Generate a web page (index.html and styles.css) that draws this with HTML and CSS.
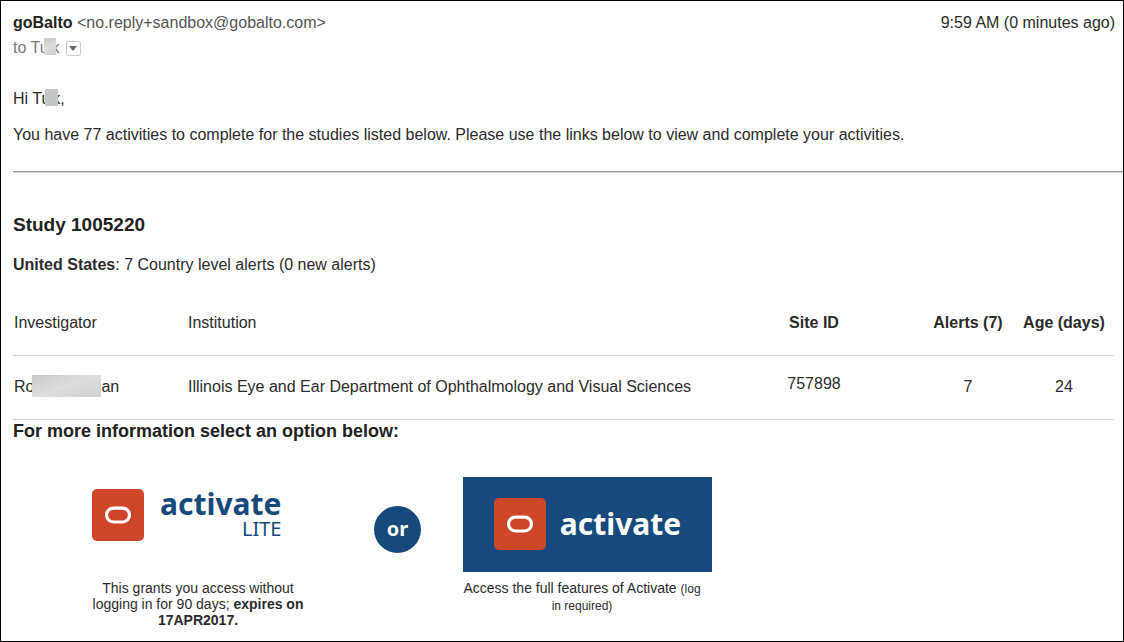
FILE: index.html
```html
<!DOCTYPE html>
<html lang="en">
<head>
<meta charset="utf-8">
<meta name="viewport" content="width=device-width, initial-scale=1">
<title>goBalto activities</title>
<link rel="stylesheet" href="styles.css">
</head>
<body>
<main class="mail">
  <header class="mail-head">
    <div class="sender"><strong>goBalto</strong> <span class="address">&lt;no.reply+sandbox@gobalto.com&gt;</span></div>
    <time class="sent">9:59 AM (0 minutes ago)</time>
  </header>
  <div class="recipient">
    <span>to Tu<span class="mask mask-name"></span>k</span>
    <button class="details" type="button" aria-label="Show details">
      <svg width="8" height="5" viewBox="0 0 8 5" aria-hidden="true"><path d="M0 0h8L4 5z" fill="#666"/></svg>
    </button>
  </div>

  <p class="greeting">Hi Tu<span class="mask mask-name mask-dark"></span>k,</p>
  <p class="intro">You have 77 activities to complete for the studies listed below. Please use the links below to view and complete your activities.</p>
  <hr class="rule">

  <h2 class="study">Study 1005220</h2>
  <p class="country"><strong>United States</strong>: 7 Country level alerts (0 new alerts)</p>

  <table class="sites">
    <colgroup><col class="col-person"><col><col class="col-site"><col class="col-alerts"><col class="col-age"></colgroup>
    <thead>
      <tr><th class="plain">Investigator</th><th class="plain">Institution</th><th>Site ID</th><th>Alerts (7)</th><th>Age (days)</th></tr>
    </thead>
    <tbody>
      <tr><td>Ro<span class="mask mask-person"></span>an</td><td>Illinois Eye and Ear Department of Ophthalmology and Visual Sciences</td><td class="num raised">757898</td><td class="num">7</td><td class="num">24</td></tr>
    </tbody>
  </table>

  <h3 class="prompt">For more information select an option below:</h3>
  <section class="options">
    <div class="option option-lite">
      <a class="brand" href="#lite">
        <svg class="mark" width="52" height="52" viewBox="0 0 52 52" aria-hidden="true"><rect width="52" height="52" rx="5" fill="#cd462a"/><rect x="14.5" y="19.2" width="23" height="13.8" rx="6.9" fill="none" stroke="#fff" stroke-width="3.2"/></svg>
        <span class="wordmark">activate<span class="edition">LITE</span></span>
      </a>
      <p class="caption">This grants you access without logging in for 90 days; <strong>expires on 17APR2017.</strong></p>
    </div>
    <span class="or">or</span>
    <div class="option option-full">
      <a class="brand brand-full" href="#full">
        <svg class="mark" width="52" height="52" viewBox="0 0 52 52" aria-hidden="true"><rect width="52" height="52" rx="5" fill="#cd462a"/><rect x="14.5" y="19.2" width="23" height="13.8" rx="6.9" fill="none" stroke="#fff" stroke-width="3.2"/></svg>
        <span class="wordmark">activate</span>
      </a>
      <p class="caption">Access the full features of Activate <small>(log in required)</small></p>
    </div>
  </section>
</main>
</body>
</html>
```
FILE: styles.css
```css
* { box-sizing: border-box; }

body {
  margin: 0;
  background: #fff;
  color: #2b2b2b;
  font: 16px/20px "Liberation Sans", Arial, sans-serif;
}

.mail {
  min-height: 100vh;
  padding: 12px 0 8px 12px;
  border: 1px solid #000;
}

p, h2, h3 { margin: 0; }

.mail-head {
  display: flex;
  justify-content: space-between;
  padding-right: 8px;
}
.sender strong { color: #222; }
.address { color: #555; }

.recipient {
  display: flex;
  align-items: center;
  gap: 6px;
  margin-top: 5px;
  color: #777;
}
.details {
  display: flex;
  align-items: center;
  justify-content: center;
  width: 15px;
  height: 15px;
  padding: 0;
  border: 1px solid #ccc;
  border-radius: 2px;
  background: #fff;
}

/* Grey blocks that hide personal names */
.mask {
  display: inline-block;
  position: relative;
  background: linear-gradient(160deg, #c8c8c8, #dedede, #cecece);
}
.mask-name {
  width: 12px;
  height: 17px;
  margin: -6px -4px -2px -5px;
  vertical-align: middle;
}
.mask-dark {
  width: 13px;
  margin-right: -6px;
  background: #c6c6c6;
}
.mask-person {
  width: 69px;
  height: 22px;
  margin: -8px 0 -4px -2px;
  vertical-align: middle;
}

.greeting { margin-top: 31px; }
.intro { margin-top: 16px; }
.rule {
  height: 2px;
  margin: 26px 0 0;
  border: 0;
  border-top: 1px solid #999;
  border-bottom: 1px solid #ddd;
}
.study {
  margin-top: 42px;
  color: #222;
  font-size: 19px;
  line-height: 20px;
}
.country { margin-top: 20px; }

.sites {
  width: calc(100% - 9px);
  margin-top: 16px;
  border-collapse: collapse;
  table-layout: fixed;
}
.sites th, .sites td {
  height: 64px;
  padding: 0 1px;
  border-bottom: 1px solid #d5d5d5;
  text-align: center;
}
.sites .plain { font-weight: normal; text-align: left; }
.sites td { text-align: left; }
.sites .num { text-align: center; }
.sites .raised { padding-bottom: 6px; }
.col-person { width: 174px; }
.col-site { width: 216px; }
.col-alerts { width: 92px; }
.col-age { width: 100px; }

.prompt {
  margin-top: 1px;
  color: #222;
  font-size: 18px;
  line-height: 20px;
}

.options {
  display: flex;
  align-items: flex-start;
  margin: 36px 0 0 78px;
}
.option { display: flex; flex-direction: column; align-items: flex-start; }
.option-lite { width: 222px; }
.option-full { width: 249px; }
.brand {
  display: flex;
  gap: 16px;
  height: 95px;
  padding: 12px 0 0 1px;
  color: #174a7c;
  text-decoration: none;
}
.brand-full {
  width: 100%;
  align-items: center;
  justify-content: center;
  padding: 0;
  gap: 14px;
  background: #174a7c;
  color: #fff;
}
.wordmark {
  display: flex;
  flex-direction: column;
  font: bold 30px/30px "Noto Sans", sans-serif;
}
.edition {
  align-self: flex-end;
  font-size: 20px;
  font-weight: normal;
  line-height: 20px;
}
.or {
  display: flex;
  align-items: center;
  justify-content: center;
  width: 47px;
  height: 47px;
  margin: 29px 42px 0 61px;
  border-radius: 50%;
  background: #174a7c;
  color: #fff;
  font: bold 20px/24px "Noto Sans", sans-serif;
}
.caption {
  width: 214px;
  margin-top: 8px;
  font-size: 14px;
  line-height: 16px;
  text-align: center;
}
.option-full .caption { width: 238px; }
.caption small { font-size: 12px; }
```
